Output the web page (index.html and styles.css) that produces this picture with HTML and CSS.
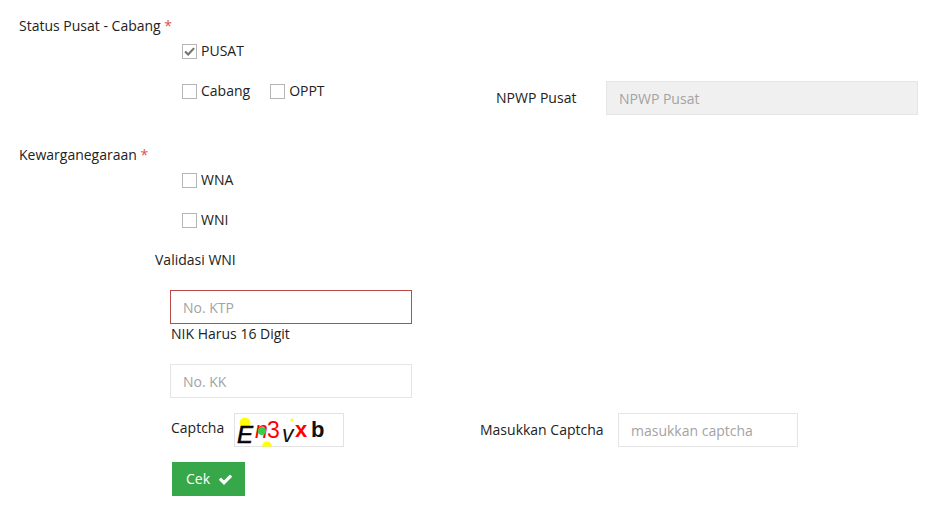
FILE: index.html
```html
<!DOCTYPE html>
<html lang="en">
<head>
    <meta charset="UTF-8">
    <title>Validasi WNI</title>
    <link rel="stylesheet" href="styles.css">
</head>
<body>

    <form class="container">
        <div class="group-label">Status Pusat - Cabang <span class="required">*</span></div>

        <div class="check-row">
            <label class="check"><span class="box">
                <svg viewBox="0 0 15 15" width="13" height="13"><path d="M2.4 7.4 L6 11 L12.8 3.6" fill="none" stroke="#737373" stroke-width="2.5"/></svg>
            </span>PUSAT</label>
        </div>

        <div class="npwp-row">
            <div class="check-group">
                <label class="check cabang"><span class="box"></span>Cabang</label>
                <label class="check"><span class="box"></span>OPPT</label>
            </div>
            <label class="npwp-label" for="npwp">NPWP Pusat</label>
            <input type="text" id="npwp" class="input npwp-input" placeholder="NPWP Pusat" disabled>
        </div>

        <div class="group-label warga">Kewarganegaraan <span class="required">*</span></div>

        <div class="check-row">
            <label class="check"><span class="box"></span>WNA</label>
        </div>
        <div class="check-row wni">
            <label class="check"><span class="box"></span>WNI</label>
        </div>

        <div class="validasi-title">Validasi WNI</div>

        <div class="validasi">
            <input type="text" class="input input-error ktp-input" placeholder="No. KTP">
            <div class="help-text">NIK Harus 16 Digit</div>
            <input type="text" class="input ktp-input" placeholder="No. KK">

            <div class="captcha-row">
                <div class="captcha-label">Captcha</div>
                <svg class="captcha-img" width="110" height="34" viewBox="0 0 110 34">
                    <rect x="0.5" y="0.5" width="109" height="33" fill="#fff" stroke="#e2e2e2"/>
                    <circle cx="11" cy="10" r="5.5" fill="#ffff00"/>
                    <path d="M28 33.5 a5 5 0 0 1 10 0 z" fill="#ffff00"/>
                    <circle cx="58" cy="7" r="1.5" fill="#ffff00"/>
                    <text x="3" y="30" class="cap cap-e">E</text>
                    <text x="21" y="25" class="cap cap-n">n</text>
                    <circle cx="28" cy="18" r="4" fill="#2fd24a"/>
                    <text x="33" y="25" class="cap cap-3">3</text>
                    <text x="48" y="29" class="cap cap-v">v</text>
                    <text x="61" y="24" class="cap cap-x">x</text>
                    <text x="77" y="24" class="cap cap-b">b</text>
                </svg>
                <label class="masuk-label" for="captcha">Masukkan Captcha</label>
                <input type="text" id="captcha" class="input captcha-input" placeholder="masukkan captcha">
            </div>

            <button type="button" class="btn-cek">Cek
                <svg class="btn-icon" viewBox="0 0 1792 1792" width="15" height="15"><path fill="#fff" d="M1671 566q0 40-28 68l-724 724-136 136q-28 28-68 28t-68-28l-136-136-362-362q-28-28-28-68t28-68l136-136q28-28 68-28t68 28l294 295 656-657q28-28 68-28t68 28l136 136q28 28 28 68z"/></svg>
            </button>
        </div>
    </form>

</body>
</html>
```

FILE: styles.css
```css
/* General Styles */
body {
    font-family: 'Open Sans', sans-serif;
    font-size: 14px;
    line-height: 20px;
    color: #222;
    background-color: #fff;
    margin: 0;
}

.container {
    padding: 15px 19px 0;
}

.required {
    color: #d9534f;
}

.group-label {
    height: 20px;
    padding-top: 1px;
    box-sizing: border-box;
}

.warga {
    margin-top: 9px;
}

/* Checkboxes */
.check-row {
    padding-left: 163px;
    margin-top: 6px;
    height: 20px;
}

.check-row.wni {
    margin-top: 20px;
}

.check-group {
    display: flex;
    align-self: flex-start;
    width: 477px;
    padding-left: 163px;
    box-sizing: border-box;
}

.check {
    display: flex;
    align-items: center;
}

.cabang {
    margin-right: 20px;
}

.box {
    width: 13px;
    height: 13px;
    border: 1px solid #b5b5b5;
    margin-right: 4px;
    display: flex;
    align-items: center;
    justify-content: center;
}

/* Inputs */
.input {
    height: 34px;
    padding: 0 12px;
    font-family: 'Open Sans', sans-serif;
    font-size: 14px;
    color: #555;
    border: 1px solid #e5e5e5;
    background-color: #fff;
    box-sizing: border-box;
    display: block;
}

.input::placeholder {
    color: #a3a3a3;
    opacity: 1;
}

.input-error {
    border-color: #b94a48;
}

.npwp-row {
    display: flex;
    margin-top: 20px;
    height: 54px;
}

.npwp-label {
    width: 110px;
    margin-top: 7px;
}

.npwp-input {
    width: 312px;
    background-color: #f0f0f0;
}

.validasi-title {
    padding-left: 136px;
    margin-top: 20px;
}

.validasi {
    padding-left: 151px;
    margin-top: 20px;
}

.ktp-input {
    width: 242px;
}

.help-text {
    height: 20px;
    margin-bottom: 20px;
    padding-left: 1px;
}

/* Captcha */
.captcha-row {
    display: flex;
    align-items: center;
    margin-top: 15px;
    height: 34px;
}

.captcha-label {
    width: 63px;
    padding-left: 1px;
    margin-top: -4px;
}

.captcha-img {
    margin-right: 136px;
}

.masuk-label {
    width: 138px;
}

.captcha-input {
    width: 180px;
}

.cap {
    font-family: 'Liberation Sans', sans-serif;
}

.cap-e {
    font-size: 24px;
    font-style: italic;
    fill: #000;
    stroke: #000;
    stroke-width: 0.6px;
}

.cap-n {
    font-size: 23px;
    font-style: italic;
    fill: #ff0000;
}

.cap-3 {
    font-size: 23px;
    fill: #ff0000;
}

.cap-v {
    font-size: 23px;
    font-style: italic;
    fill: #111;
}

.cap-x {
    font-size: 22px;
    font-weight: bold;
    fill: #ff0000;
}

.cap-b {
    font-size: 22px;
    font-weight: bold;
    fill: #111;
}

/* Button */
.btn-cek {
    display: flex;
    align-items: center;
    gap: 8px;
    margin: 15px 0 0 2px;
    width: 73px;
    height: 34px;
    padding: 0 0 1px 14px;
    font-family: 'Open Sans', sans-serif;
    font-size: 14px;
    color: #fff;
    background-color: #37a84a;
    border: none;
    cursor: pointer;
}

.btn-icon {
    margin-top: 1px;
}
```
